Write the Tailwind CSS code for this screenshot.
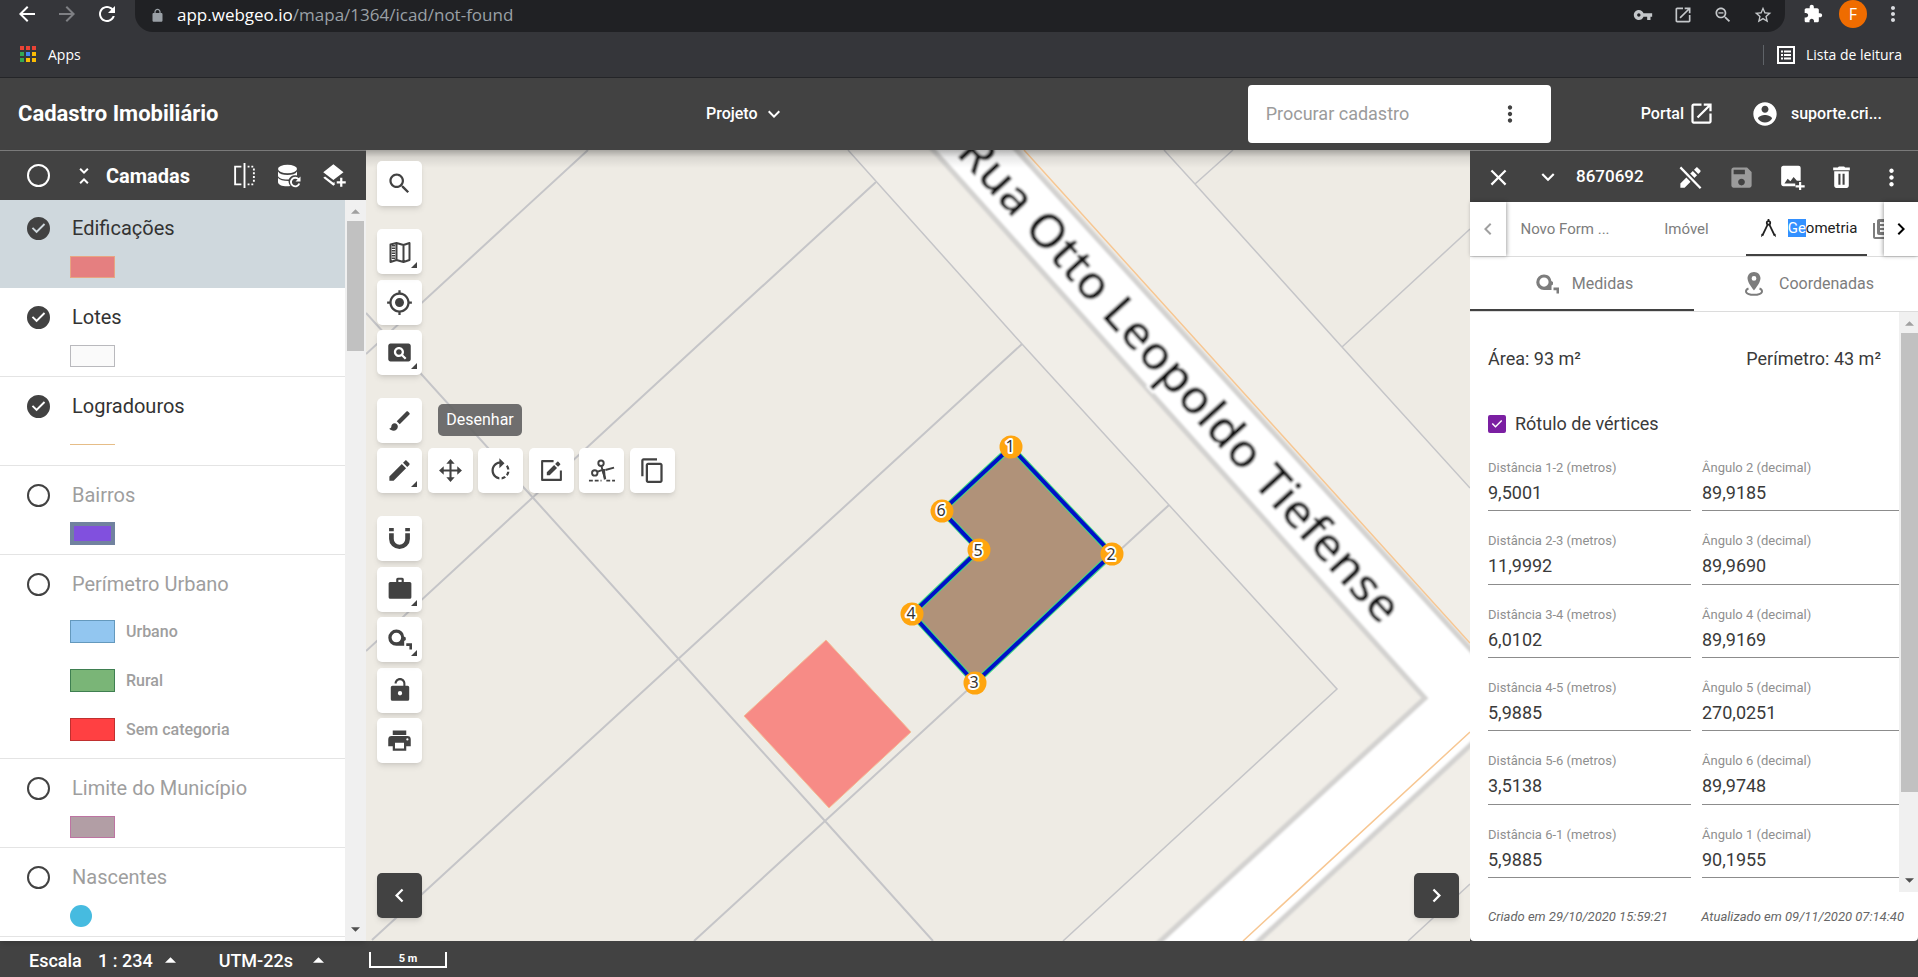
<!DOCTYPE html>
<html lang="pt-BR">
<head>
    <meta charset="UTF-8">
    <meta name="viewport" content="width=device-width, initial-scale=1.0">
    <title>Cadastro Imobiliário</title>
    <script src="https://cdn.jsdelivr.net/npm/@tailwindcss/browser@4"></script>
</head>
<body class="flex flex-col h-screen overflow-hidden bg-[#424242] font-['Roboto',sans-serif]">

    <!-- Icon sprite -->
    <svg class="hidden">
        <symbol id="back" viewBox="0 0 24 24"><path d="M20 11H7.83l5.59-5.59L12 4l-8 8 8 8 1.41-1.41L7.83 13H20v-2z"/></symbol>
        <symbol id="forward" viewBox="0 0 24 24"><path d="M12 4l-1.41 1.41L16.17 11H4v2h12.17l-5.58 5.59L12 20l8-8z"/></symbol>
        <symbol id="reload" viewBox="0 0 24 24"><path d="M17.65 6.35C16.2 4.9 14.21 4 12 4c-4.42 0-7.99 3.58-7.99 8s3.57 8 7.99 8c3.73 0 6.84-2.55 7.73-6h-2.08c-.82 2.33-3.04 4-5.65 4-3.31 0-6-2.69-6-6s2.69-6 6-6c1.66 0 3.14.69 4.22 1.78L13 11h7V4l-2.35 2.35z"/></symbol>
        <symbol id="lock" viewBox="0 0 24 24"><path d="M18 8h-1V6c0-2.76-2.24-5-5-5S7 3.24 7 6v2H6c-1.1 0-2 .9-2 2v10c0 1.1.9 2 2 2h12c1.1 0 2-.9 2-2V10c0-1.1-.9-2-2-2zM9 6c0-1.66 1.34-3 3-3s3 1.34 3 3v2H9V6z"/></symbol>
        <symbol id="key" viewBox="0 0 24 24"><path d="M12.65 10C11.83 7.67 9.61 6 7 6c-3.31 0-6 2.69-6 6s2.69 6 6 6c2.61 0 4.83-1.67 5.65-4H17v4h4v-4h2v-4H12.65zM7 14c-1.1 0-2-.9-2-2s.9-2 2-2 2 .9 2 2-.9 2-2 2z"/></symbol>
        <symbol id="open" viewBox="0 0 24 24"><path d="M19 19H5V5h7V3H5c-1.11 0-2 .9-2 2v14c0 1.1.89 2 2 2h14c1.1 0 2-.9 2-2v-7h-2v7zM14 3v2h3.59l-9.83 9.83 1.41 1.41L19 6.41V10h2V3h-7z"/></symbol>
        <symbol id="search" viewBox="0 0 24 24"><path d="M15.5 14h-.79l-.28-.27C15.41 12.59 16 11.11 16 9.5 16 5.91 13.09 3 9.5 3S3 5.91 3 9.5 5.91 16 9.5 16c1.61 0 3.09-.59 4.23-1.57l.27.28v.79l5 4.99L20.49 19l-4.99-5zm-6 0C7.01 14 5 11.99 5 9.5S7.01 5 9.5 5 14 7.01 14 9.5 11.99 14 9.5 14z"/></symbol>
        <symbol id="zoom-out" viewBox="0 0 24 24"><use href="#search"/><path d="M6.5 8.7h6v1.6h-6z"/></symbol>
        <symbol id="star" viewBox="0 0 24 24"><path d="M22 9.24l-7.19-.62L12 2 9.19 8.63 2 9.24l5.46 4.73L5.82 21 12 17.27 18.18 21l-1.63-7.03L22 9.24zM12 15.4l-3.76 2.27 1-4.28-3.32-2.88 4.38-.38L12 6.1l1.71 4.04 4.38.38-3.32 2.88 1 4.28L12 15.4z"/></symbol>
        <symbol id="puzzle" viewBox="0 0 24 24"><path d="M20.5 11H19V7c0-1.1-.9-2-2-2h-4V3.5C13 2.12 11.88 1 10.5 1S8 2.12 8 3.5V5H4c-1.1 0-1.99.9-1.99 2v3.8H3.5c1.49 0 2.7 1.21 2.7 2.7s-1.21 2.7-2.7 2.7H2V20c0 1.1.9 2 2 2h3.8v-1.5c0-1.49 1.21-2.7 2.7-2.7 1.49 0 2.7 1.21 2.7 2.7V22H17c1.1 0 2-.9 2-2v-4h1.5c1.38 0 2.5-1.12 2.5-2.5S21.88 11 20.5 11z"/></symbol>
        <symbol id="dots" viewBox="0 0 24 24"><path d="M12 8c1.1 0 2-.9 2-2s-.9-2-2-2-2 .9-2 2 .9 2 2 2zm0 2c-1.1 0-2 .9-2 2s.9 2 2 2 2-.9 2-2-.9-2-2-2zm0 6c-1.1 0-2 .9-2 2s.9 2 2 2 2-.9 2-2-.9-2-2-2z"/></symbol>
        <symbol id="reading-list" viewBox="0 0 18 18"><path fill-rule="evenodd" d="M0 0h18v18H0zM2 2v14h14V2zM4 4.500h2v2H4zm3 0h7v2H7zM4 8h2v2H4zm3 0h7v2H7zm-3 3.500h2v2H4zm3 0h7v2H7z"/></symbol>
        <symbol id="down" viewBox="0 0 24 24"><path d="M16.59 8.59L12 13.17 7.41 8.59 6 10l6 6 6-6z"/></symbol>
        <symbol id="left" viewBox="0 0 24 24"><path d="M15.41 7.41L14 6l-6 6 6 6 1.41-1.41L10.830 12z"/></symbol>
        <symbol id="right" viewBox="0 0 24 24"><path d="M10 6L8.590 7.410 13.170 12l-4.580 4.590L10 18l6-6z"/></symbol>
        <symbol id="account" viewBox="0 0 24 24"><path d="M12 2C6.48 2 2 6.48 2 12s4.480 10 10 10 10-4.480 10-10S17.520 2 12 2zm0 3c1.660 0 3 1.340 3 3s-1.340 3-3 3-3-1.340-3-3 1.340-3 3-3zm0 14.200c-2.500 0-4.710-1.280-6-3.220.03-1.990 4-3.080 6-3.080 1.990 0 5.970 1.090 6 3.080-1.290 1.940-3.500 3.220-6 3.220z"/></symbol>
        <symbol id="collapse" viewBox="0 0 24 24"><path d="M7.410 18.590L8.830 20 12 16.830 15.170 20l1.410-1.410L12 14l-4.590 4.590zm9.180-13.180L15.170 4 12 7.170 8.830 4 7.410 5.410 12 10l4.590-4.590z"/></symbol>
        <symbol id="compare" viewBox="0 0 24 24"><path fill="none" stroke="currentColor" stroke-width="1.800" d="M9 3.500H3v17h6M12 0v24"/><path fill="none" stroke="currentColor" stroke-width="1.800" stroke-dasharray="1.800 1.800" d="M15 3.500h6M21 5.300v14M15 20.500h7"/></symbol>
        <symbol id="database" viewBox="0 0 24 24"><ellipse cx="10.500" cy="5" rx="9.500" ry="4.200"/><path d="M1 7.500c1.500 2.600 5 3.500 9.500 3.500s8-.9 9.500-3.500v4c-3.500-1.200-7.500 1-8.300 4C6 15.800 1 14.200 1 11.500zM1 14c1.800 2 5 3 10.500 3 .1 2.200.7 3.600 2 5C7 22.800 1 21.500 1 18z"/><path fill="none" stroke="currentColor" stroke-width="1.900" d="M21.500 15.200a4.300 4.300 0 1 0 .8 4.300"/><path d="M23.500 12.500v5h-5z"/></symbol>
        <symbol id="layers-plus" viewBox="0 0 24 24"><path d="M17 14h2v3h3v2h-3v3h-2v-3h-3v-2h3v-3m-6 2L2 9l9-7 9 7-9 7m0 2.540l1-.790v.250c0 .710.120 1.390.350 2L11 21.070l-9-7 1.620-1.260L11 18.540z"/></symbol>
        <symbol id="tick" viewBox="0 0 24 24"><path d="M10 17l-5-5 1.410-1.410L10 14.170l7.590-7.590L19 8l-9 9z"/></symbol>
        <symbol id="map" viewBox="0 0 24 24"><path fill="none" stroke="currentColor" stroke-width="2" stroke-linejoin="round" d="M2.500 4.500L8.500 3l7 2 6-2v17l-6 2-7-2-6 2zM8.500 3v17M15.500 5v17"/><path fill="none" stroke="currentColor" stroke-width="3.500" stroke-dasharray="1.500 1" d="M5.500 5v15"/></symbol>
        <symbol id="locate" viewBox="0 0 24 24"><path d="M12 8c-2.210 0-4 1.790-4 4s1.790 4 4 4 4-1.790 4-4-1.790-4-4-4zm8.940 3c-.460-4.170-3.770-7.480-7.940-7.940V1h-2v2.060C6.830 3.520 3.520 6.830 3.060 11H1v2h2.060c.460 4.170 3.770 7.480 7.940 7.940V23h2v-2.060c4.170-.460 7.480-3.770 7.940-7.940H23v-2h-2.060zM12 19c-3.870 0-7-3.130-7-7s3.130-7 7-7 7 3.130 7 7-3.130 7-7 7z"/></symbol>
        <symbol id="pageview" viewBox="0 0 24 24"><path d="M11.500 9C10.120 9 9 10.120 9 11.500s1.120 2.500 2.500 2.500 2.500-1.120 2.500-2.500S12.880 9 11.500 9zM20 4H4c-1.100 0-2 .9-2 2v12c0 1.100.9 2 2 2h16c1.100 0 2-.9 2-2V6c0-1.100-.9-2-2-2zm-3.210 14.210l-2.910-2.910c-.690.440-1.510.7-2.390.7C9.010 16 7 13.990 7 11.500S9.010 7 11.500 7 16 9.010 16 11.500c0 .880-.260 1.690-.7 2.390l2.910 2.900-1.420 1.420z"/></symbol>
        <symbol id="brush" viewBox="0 0 24 24"><path d="M7 14c-1.660 0-3 1.340-3 3 0 1.310-1.160 2-2 2 .920 1.220 2.490 2 4 2 2.210 0 4-1.790 4-4 0-1.660-1.340-3-3-3zm13.710-9.370l-1.340-1.340c-.390-.390-1.020-.390-1.410 0L9 12.250 11.750 15l8.960-8.960c.390-.390.390-1.020 0-1.410z"/></symbol>
        <symbol id="pencil" viewBox="0 0 24 24"><path d="M3 17.250V21h3.750L17.810 9.940l-3.750-3.750L3 17.250zM20.710 7.040c.390-.390.390-1.020 0-1.410l-2.340-2.340c-.390-.390-1.020-.390-1.410 0l-1.830 1.830 3.750 3.750 1.830-1.830z"/></symbol>
        <symbol id="move" viewBox="0 0 24 24"><path d="M11 4h2v16h-2zM4 11h16v2H4zM12 1l4 4.500H8zM12 23l-4-4.500h8zM1 12l4.500-4v8zM23 12l-4.500 4V8z"/></symbol>
        <symbol id="rotate" viewBox="0 0 24 24"><path d="M15.550 5.550L11 1v3.070C7.060 4.560 4 7.920 4 12s3.050 7.440 7 7.930v-2.020c-2.840-.480-5-2.940-5-5.910s2.160-5.430 5-5.910V10l4.550-4.450zM19.930 11c-.170-1.390-.720-2.730-1.620-3.890l-1.420 1.420c.540.750.880 1.600 1.020 2.470h2.020zM13 17.900v2.020c1.390-.170 2.740-.710 3.900-1.610l-1.440-1.440c-.750.540-1.590.890-2.460 1.030zm3.890-2.420l1.420 1.410c.9-1.160 1.450-2.500 1.620-3.890h-2.020c-.140.870-.480 1.720-1.020 2.480z"/></symbol>
        <symbol id="edit-box" viewBox="0 0 24 24"><path fill="none" stroke="currentColor" stroke-width="2" stroke-linejoin="round" d="M14 3H3v18h18V12"/><path d="M7.500 13.700V16.500h2.800l7-7-2.800-2.800zM18.300 8.500l2-2a.8.8 0 0 0 0-1.100l-1.700-1.700a.8.8 0 0 0-1.100 0l-2 2z"/></symbol>
        <symbol id="cut" viewBox="0 0 28 24"><g fill="none" stroke="currentColor" stroke-width="2"><circle cx="13.500" cy="4" r="2.800"/><circle cx="7" cy="14" r="2.800"/><path d="M14 7l1.500 6L18 20.500M9.500 13l6-2.500M18 11l9-2.500"/><path stroke-dasharray="4 2" d="M1 22h13M19 22h9"/></g><path d="M14.500 10h3l1 10-2 1z"/></symbol>
        <symbol id="copy" viewBox="0 0 24 24"><path d="M16 1H4c-1.100 0-2 .9-2 2v14h2V3h12V1zm3 4H8c-1.100 0-2 .9-2 2v14c0 1.100.9 2 2 2h11c1.100 0 2-.9 2-2V7c0-1.100-.9-2-2-2zm0 16H8V7h11v14z"/></symbol>
        <symbol id="magnet" viewBox="0 0 24 24"><path d="M2 7v5.500a10 9.500 0 0 0 20 0V7h-4.500v5.500a5.500 5.500 0 0 1-11 0V7zM2 2h4.500v3H2zM17.500 2H22v3h-4.500z"/></symbol>
        <symbol id="briefcase" viewBox="0 0 24 24"><path fill-rule="evenodd" d="M10 1.500h4a1.500 1.500 0 0 1 1.500 1.500v2.500H21A1.500 1.500 0 0 1 22.500 7v12.500A1.500 1.500 0 0 1 21 21H3a1.500 1.500 0 0 1-1.500-1.500V7A1.500 1.500 0 0 1 3 5.500h5.500V3A1.500 1.500 0 0 1 10 1.500zm.5 2v2h3v-2z"/></symbol>
        <symbol id="tape" viewBox="0 0 24 24"><path fill-rule="evenodd" d="M9 2.500c4.200 0 7 2.800 7.300 6.500l1.700 1v2.500l-1.500 1v4.500H9a7.700 7.700 0 0 1 0-15.500zM9 5.500a4.600 4.600 0 1 0 0 9.200 4.600 4.600 0 0 0 0-9.200z"/><path d="M18.500 15.500H24v6h-2.500v-3.200h-3z"/></symbol>
        <symbol id="unlock" viewBox="0 0 24 24"><path fill-rule="evenodd" d="M12 17a2 2 0 1 0 0-4 2 2 0 0 0 0 4zm6-9h-1V6c0-2.760-2.240-5-5-5S7 3.240 7 6h1.900c0-1.710 1.390-3.100 3.100-3.100s3.100 1.390 3.100 3.100v2H5a1.500 1.500 0 0 0-1.500 1.500v11A1.500 1.500 0 0 0 5 22h14a1.500 1.500 0 0 0 1.500-1.500v-11A1.500 1.500 0 0 0 19 8z"/></symbol>
        <symbol id="print" viewBox="0 0 24 24"><path d="M18 3H6v4h12m1 5a1 1 0 0 1-1-1 1 1 0 0 1 1-1 1 1 0 0 1 1 1 1 1 0 0 1-1 1m-3 7H8v-5h8m3-6H5a3 3 0 0 0-3 3v6h4v4h12v-4h4v-6a3 3 0 0 0-3-3z"/></symbol>
        <symbol id="close" viewBox="0 0 24 24"><path d="M19 6.410L17.590 5 12 10.590 6.410 5 5 6.410 10.590 12 5 17.590 6.410 19 12 13.410 17.590 19 19 17.590 13.410 12z"/></symbol>
        <symbol id="edit-off" viewBox="0 0 24 24"><use href="#pencil"/><path stroke="#424242" stroke-width="5" d="M3 3l18 18.500"/><path stroke="currentColor" stroke-width="2" d="M3 3l18 18.500"/></symbol>
        <symbol id="save" viewBox="0 0 24 24"><path d="M17 3H5c-1.110 0-2 .9-2 2v14c0 1.100.890 2 2 2h14c1.100 0 2-.9 2-2V7l-4-4zm-5 16c-1.660 0-3-1.340-3-3s1.340-3 3-3 3 1.340 3 3-1.340 3-3 3zm3-10H5V5h10v4z"/></symbol>
        <symbol id="image-plus" viewBox="0 0 24 24"><path d="M4 1.500c-1.100 0-2 .9-2 2v15c0 1.100.9 2 2 2h11V18H5l3-4.500 2.500 2.500 3-4 3 3.500H20v-12a2 2 0 0 0-2-2zM18.500 16.500v3.200h-3.200v2h3.200V25h2v-3.300h3.200v-2h-3.200v-3.200z"/></symbol>
        <symbol id="trash" viewBox="0 0 24 24"><path fill-rule="evenodd" d="M5 6h14v14c0 1.100-.9 2-2 2H7c-1.100 0-2-.9-2-2zm4 2.500V19h2V8.500zm4 0V19h2V8.500zM20 2.500V5H4V2.500h4.500L9.500 1.500h5l1 1z"/></symbol>
        <symbol id="divider" viewBox="0 0 24 24"><g fill="none" stroke="currentColor" stroke-width="2"><circle cx="12" cy="5.500" r="2"/><path d="M12 1v2.500M11 7.500L5 20M13 7.500L19 20"/></g><path d="M4 18l2.500 1L3.500 22zM20 18l-2.500 1 3 3z"/></symbol>
        <symbol id="library" viewBox="0 0 24 24"><path d="M4 6H2v14c0 1.100.9 2 2 2h14v-2H4V6zm16-4H8c-1.100 0-2 .9-2 2v12c0 1.100.9 2 2 2h12c1.100 0 2-.9 2-2V4c0-1.100-.9-2-2-2zm-1 9H9V9h10v2zm-4 4H9v-2h6v2zm4-8H9V5h10v2z"/></symbol>
        <symbol id="pin" viewBox="0 0 24 24"><path fill-rule="evenodd" d="M12 0C8.200 0 5.500 2.900 5.500 6.300 5.500 11 12 18.500 12 18.500S18.500 11 18.500 6.300C18.500 2.900 15.800 0 12 0zm0 4a2.400 2.400 0 1 1 0 4.800A2.400 2.400 0 0 1 12 4z"/><path fill="none" stroke="currentColor" stroke-width="2" d="M6.500 16.500C2.500 18 2.500 22.800 12 22.800s9.500-4.800 5.500-6.300"/></symbol>
        <symbol id="tri-up" viewBox="0 0 10 5"><path d="M5 0l5 5H0z"/></symbol>
        <symbol id="tri-down" viewBox="0 0 10 5"><path d="M0 0h10L5 5z"/></symbol>
        <symbol id="corner" viewBox="0 0 6 6"><path d="M6 0v6H0z"/></symbol>
    </svg>

    <!-- Browser toolbar -->
    <div class="shrink-0 h-[78px] bg-[#35363a] border-b border-[#242528] text-white font-['Open_Sans',sans-serif]">
        <div class="flex h-8">
            <div class="flex w-[135px] h-7 items-center gap-4 pl-[15px]">
                <button aria-label="Voltar"><svg class="size-6 fill-white"><use href="#back"/></svg></button>
                <button aria-label="Avançar"><svg class="size-6 fill-[#7f8084]"><use href="#forward"/></svg></button>
                <button aria-label="Recarregar"><svg class="size-6 fill-white"><use href="#reload"/></svg></button>
            </div>
            <div class="flex flex-1 items-center rounded-b-[18px] bg-[#202124] pl-[15px] pr-3 pb-0.5">
                <svg class="size-[15px] fill-[#9aa0a6]"><use href="#lock"/></svg>
                <p class="ml-3 text-[17px] text-[#9aa0a6]"><span class="text-white">app.webgeo.io</span>/mapa/1364/icad/not-found</p>
                <div class="flex ml-auto items-center gap-5 fill-[#c4c7ca]">
                    <svg class="size-5"><use href="#key"/></svg>
                    <svg class="size-5"><use href="#open"/></svg>
                    <svg class="size-5"><use href="#zoom-out"/></svg>
                    <svg class="size-5"><use href="#star"/></svg>
                </div>
            </div>
            <div class="flex w-[133px] h-7 items-center pl-[18px]">
                <svg class="size-5 fill-white"><use href="#puzzle"/></svg>
                <span class="flex size-7 ml-4 items-center justify-center rounded-full bg-[#ef6c00] text-[16px]">F</span>
                <svg class="size-6 ml-[14px] fill-[#dadce0]"><use href="#dots"/></svg>
            </div>
        </div>
        <div class="flex h-[45px] items-center pl-5 pr-4 text-[14px]">
            <svg class="w-[17px] h-[17px]" viewBox="0 0 17 17">
                <path fill="#ea4335" d="M0 0h4v4H0zM6 0h4v4H6zM12 0h4v4h-4z"/>
                <path fill="#34a853" d="M0 6h4v4H0zM0 12h4v4H0z"/>
                <path fill="#4285f4" d="M6 6h4v4H6z"/>
                <path fill="#fbbc04" d="M12 6h4v4h-4zM6 12h4v4H6zM12 12h4v4h-4z"/>
            </svg>
            <a href="#" class="ml-[11px]">Apps</a>
            <span class="ml-auto w-px h-5 bg-[#5f6368]"></span>
            <svg class="size-[18px] ml-[13px] fill-white"><use href="#reading-list"/></svg>
            <a href="#" class="ml-[11px]">Lista de leitura</a>
        </div>
    </div>

    <!-- App header -->
    <header class="flex shrink-0 h-[72px] items-center pl-[18px] pr-[36px] pb-px text-white font-medium">
        <h1 class="w-[688px] text-[22px] font-bold">Cadastro Imobiliário</h1>
        <button class="flex items-center gap-1 text-[16px]">Projeto <svg class="size-6 fill-white"><use href="#down"/></svg></button>
        <div class="flex ml-auto mr-[90px] w-[303px] h-[58px] items-center rounded-[4px] bg-white pl-[18px] pr-7">
            <input type="text" aria-label="Procurar cadastro" placeholder="Procurar cadastro" class="flex-1 min-w-0 text-[18px] font-normal text-gray-800 placeholder:text-[#9b9b9b] outline-none">
            <button aria-label="Opções de busca"><svg class="size-[26px] fill-[#424242]"><use href="#dots"/></svg></button>
        </div>
        <a href="#" class="flex items-center gap-1 text-[16px]">Portal <svg class="size-[27px] fill-white"><use href="#open"/></svg></a>
        <button class="flex ml-9 items-center gap-3 text-[16px]"><svg class="size-7 fill-white"><use href="#account"/></svg>suporte.cri...</button>
    </header>

    <main class="flex flex-1 min-h-0">

        <!-- Layers -->
        <aside class="flex flex-col shrink-0 w-[366px] bg-white shadow-md">
            <div class="flex relative z-10 shrink-0 h-[50px] items-center border-t border-[#7a7a7a] bg-[#424242] pl-[27px] pr-[18px] text-white">
                <input type="checkbox" aria-label="Todas as camadas" class="appearance-none size-[23px] rounded-full border-2 border-white">
                <button aria-label="Recolher" class="ml-[22px]"><svg class="size-6 fill-white"><use href="#collapse"/></svg></button>
                <h2 class="ml-[10px] text-[20px] font-bold">Camadas</h2>
                <div class="flex ml-auto items-center gap-5 fill-white">
                    <button aria-label="Comparar"><svg class="size-[25px]"><use href="#compare"/></svg></button>
                    <button aria-label="Atualizar dados"><svg class="size-6"><use href="#database"/></svg></button>
                    <button aria-label="Adicionar camada"><svg class="size-[27px]"><use href="#layers-plus"/></svg></button>
                </div>
            </div>
            <div class="flex flex-1 min-h-0 -mt-px">
                <ul class="flex-1 overflow-hidden text-[20px] text-[#9e9e9e]">
                    <li class="h-[89px] border-b border-[#cfd8dd] bg-[#cfd8dd] pt-[15px]">
                        <label class="flex h-7 items-center gap-[22px] pl-[27px] text-[#333]">
                            <span class="grid"><input type="checkbox" checked class="col-start-1 row-start-1 appearance-none size-[23px] rounded-full border-2 border-[#424242] checked:bg-[#424242]"><svg class="col-start-1 row-start-1 size-[23px] fill-[#cfd8dd] pointer-events-none"><use href="#tick"/></svg></span>
                            Edificações
                        </label>
                        <div class="w-[45px] h-[22px] ml-[70px] mt-[14px] border border-[#e8a582] bg-[#e57f80]"></div>
                    </li>
                    <li class="h-[89px] border-b border-[#e4e4e4] pt-[15px]">
                        <label class="flex h-7 items-center gap-[22px] pl-[27px] text-[#333]">
                            <span class="grid"><input type="checkbox" checked class="col-start-1 row-start-1 appearance-none size-[23px] rounded-full border-2 border-[#424242] checked:bg-[#424242]"><svg class="col-start-1 row-start-1 size-[23px] fill-white pointer-events-none"><use href="#tick"/></svg></span>
                            Lotes
                        </label>
                        <div class="w-[45px] h-[22px] ml-[70px] mt-[14px] border border-[#b9b9bd] bg-[#fafafa]"></div>
                    </li>
                    <li class="h-[89px] border-b border-[#e4e4e4] pt-[15px]">
                        <label class="flex h-7 items-center gap-[22px] pl-[27px] text-[#333]">
                            <span class="grid"><input type="checkbox" checked class="col-start-1 row-start-1 appearance-none size-[23px] rounded-full border-2 border-[#424242] checked:bg-[#424242]"><svg class="col-start-1 row-start-1 size-[23px] fill-white pointer-events-none"><use href="#tick"/></svg></span>
                            Logradouros
                        </label>
                        <div class="w-[45px] h-px ml-[70px] mt-6 bg-[#e6bd87]"></div>
                    </li>
                    <li class="h-[89px] border-b border-[#e4e4e4] pt-[15px]">
                        <label class="flex h-7 items-center gap-[22px] pl-[27px]">
                            <input type="checkbox" class="appearance-none size-[23px] rounded-full border-2 border-[#424242]">
                            Bairros
                        </label>
                        <div class="w-[45px] h-[23px] ml-[70px] mt-[13px] border-4 border-[#71829f] bg-[#8150de]"></div>
                    </li>
                    <li class="h-[204px] border-b border-[#e4e4e4] pt-[15px]">
                        <label class="flex h-7 items-center gap-[22px] pl-[27px]">
                            <input type="checkbox" class="appearance-none size-[23px] rounded-full border-2 border-[#424242]">
                            Perímetro Urbano
                        </label>
                        <div class="mt-[9px] pl-[70px] text-[16px] font-medium">
                            <div class="flex h-[49px] items-center gap-[11px]"><span class="w-[45px] h-[23px] border border-[#6499bd] bg-[#92c6f0]"></span>Urbano</div>
                            <div class="flex h-[49px] items-center gap-[11px]"><span class="w-[45px] h-[23px] border border-[#3f7f51] bg-[#7ab577]"></span>Rural</div>
                            <div class="flex h-[49px] items-center gap-[11px]"><span class="w-[45px] h-[23px] border border-[#c0302f] bg-[#ff4042]"></span>Sem categoria</div>
                        </div>
                    </li>
                    <li class="h-[89px] border-b border-[#e4e4e4] pt-[15px]">
                        <label class="flex h-7 items-center gap-[22px] pl-[27px]">
                            <input type="checkbox" class="appearance-none size-[23px] rounded-full border-2 border-[#424242]">
                            Limite do Município
                        </label>
                        <div class="w-[45px] h-[22px] ml-[70px] mt-[14px] border border-[#bd74a2] bg-[#b29ea5]"></div>
                    </li>
                    <li class="h-[89px] border-b border-[#e4e4e4] pt-[15px]">
                        <label class="flex h-7 items-center gap-[22px] pl-[27px]">
                            <input type="checkbox" class="appearance-none size-[23px] rounded-full border-2 border-[#424242]">
                            Nascentes
                        </label>
                        <div class="size-[22px] ml-[70px] mt-[14px] rounded-full bg-[#46bbe0]"></div>
                    </li>
                </ul>
                <!-- Scrollbar -->
                <div class="flex flex-col w-[21px] items-center bg-[#f0f0f0]">
                    <svg class="w-[9px] h-[5px] mt-[10px] mb-[7px] fill-[#a0a0a0]"><use href="#tri-up"/></svg>
                    <div class="w-[17px] h-[130px] bg-[#c1c1c1]"></div>
                    <svg class="w-[9px] h-[5px] mt-auto mb-[9px] fill-[#505050]"><use href="#tri-down"/></svg>
                </div>
            </div>
        </aside>

        <!-- Map -->
        <section class="relative flex-1 min-w-0 overflow-hidden bg-[#eeebe4]">
            <svg class="absolute inset-0 size-full" viewBox="366 150 1104 791" preserveAspectRatio="xMinYMin slice">
                <defs>
                    <filter id="soft" x="-5%" y="-5%" width="110%" height="110%"><feGaussianBlur stdDeviation="1"/></filter>
                    <linearGradient id="shade" x1="0" y1="0" x2="0" y2="1"><stop offset="0" stop-color="#000" stop-opacity=".3"/><stop offset=".4" stop-color="#000" stop-opacity=".09"/><stop offset="1" stop-color="#000" stop-opacity="0"/></linearGradient>
                </defs>
                <path fill="#f1eee8" d="M848 150H1164L1195 184 1341 347 1470 488V884L1408 941H1063L1337 689 1169 505 1022 344z"/>
                <!-- Streets -->
                <g filter="url(#soft)">
                    <path fill="#fff" stroke="#d3d2d0" stroke-width="5" d="M918 133L1142 383 1425 698 1142 958 1240 958 1490 727V671L1001 133z"/>
                </g>
                <!-- Lots -->
                <g fill="none" stroke="#c5c5c8">
                    <path stroke-width="2" d="M588 150L366 354M366 313L535 500 825 821 933 941M876 182L695 348 366 651M1022 344L700 639 372 940M1169 505L825 821 694 941"/>
                    <path stroke-width="1.500" d="M848 150L1022 344 1169 505 1337 689 1063 941M1164 150L1195 184 1342 347 1470 488M1233 150L1195 184M1342 347L1470 229M1470 884L1408 941"/>
                </g>
                <path fill="none" stroke="#f7c793" stroke-width="1.500" d="M1024 150L1470 643M1470 732L1243 941"/>
                <g transform="translate(955 154) rotate(48)" filter="url(#soft)" class="font-['Noto_Sans',sans-serif] text-[48px]">
                    <text fill="#111" stroke="#fff" stroke-width="5" paint-order="stroke" class="font-medium">Rua Otto Leopoldo Tiefense</text>
                </g>
                <!-- Buildings -->
                <path fill="#f78b86" stroke="#f3bd95" d="M826 640L911 732 829 808 744 716z"/>
                <path fill="#b09279" stroke="#3fdc84" stroke-width="6" d="M1011 447L1112 554 975 683 912 614 979 550 942 511z"/>
                <path fill="none" stroke="#0010c8" stroke-width="4" d="M1011 447L1112 554 975 683 912 614 979 550 942 511z"/>
                <g fill="#ffa50f">
                    <circle cx="1011" cy="447" r="11.500"/><circle cx="1112" cy="554" r="11.500"/><circle cx="975" cy="683" r="11.500"/>
                    <circle cx="912" cy="614" r="11.500"/><circle cx="979" cy="550" r="11.500"/><circle cx="942" cy="511" r="11.500"/>
                </g>
                <g fill="#333" stroke="#fff" stroke-width="4" stroke-linejoin="round" paint-order="stroke" text-anchor="middle" class="font-['Noto_Sans',sans-serif] text-[16px]">
                    <text x="1010" y="452">1</text><text x="1111" y="560">2</text><text x="974" y="688">3</text>
                    <text x="911" y="619">4</text><text x="978" y="556">5</text><text x="941" y="516">6</text>
                </g>
                <path fill="url(#shade)" d="M366 150h1104v18H366z"/>
            </svg>

            <!-- Toolbox -->
            <div class="absolute left-[11px] top-[11px] flex flex-col gap-[23px] fill-[#424242] text-[#424242]">
                <button aria-label="Pesquisar" class="flex size-[45px] items-center justify-center rounded-[5px] bg-white shadow-md"><svg class="size-[27px]"><use href="#search"/></svg></button>
                <div class="flex flex-col justify-between h-[146px]">
                    <button aria-label="Mapas base" class="relative flex size-[45px] items-center justify-center rounded-[5px] bg-white shadow-md"><svg class="size-6"><use href="#map"/></svg><svg class="absolute right-[5px] bottom-[6px] size-[6px]"><use href="#corner"/></svg></button>
                    <button aria-label="Minha localização" class="flex size-[45px] items-center justify-center rounded-[5px] bg-white shadow-md"><svg class="size-[27px]"><use href="#locate"/></svg></button>
                    <button aria-label="Consultar" class="relative flex size-[45px] items-center justify-center rounded-[5px] bg-white shadow-md"><svg class="size-[27px]"><use href="#pageview"/></svg><svg class="absolute right-[5px] bottom-[6px] size-[6px]"><use href="#corner"/></svg></button>
                </div>
                <div class="flex flex-col justify-between h-[95px]">
                    <button aria-label="Pincel" class="flex size-[45px] items-center justify-center rounded-[5px] bg-white shadow-md"><svg class="size-[26px]"><use href="#brush"/></svg></button>
                    <div class="flex justify-between w-[298px]">
                        <button aria-label="Desenhar" class="relative flex size-[45px] items-center justify-center rounded-[5px] bg-white shadow-md"><svg class="size-[27px]"><use href="#pencil"/></svg><svg class="absolute right-[5px] bottom-[6px] size-[6px]"><use href="#corner"/></svg></button>
                        <button aria-label="Mover" class="flex size-[45px] items-center justify-center rounded-[5px] bg-white shadow-md"><svg class="size-[25px]"><use href="#move"/></svg></button>
                        <button aria-label="Rotacionar" class="flex size-[45px] items-center justify-center rounded-[5px] bg-white shadow-md"><svg class="size-[27px]"><use href="#rotate"/></svg></button>
                        <button aria-label="Editar" class="flex size-[45px] items-center justify-center rounded-[5px] bg-white shadow-md"><svg class="size-[25px]"><use href="#edit-box"/></svg></button>
                        <button aria-label="Dividir" class="flex size-[45px] items-center justify-center rounded-[5px] bg-white shadow-md"><svg class="w-[27px] h-6"><use href="#cut"/></svg></button>
                        <button aria-label="Copiar" class="flex size-[45px] items-center justify-center rounded-[5px] bg-white shadow-md"><svg class="size-[27px]"><use href="#copy"/></svg></button>
                    </div>
                </div>
                <div class="flex flex-col justify-between h-[247px]">
                    <button aria-label="Aderência" class="flex size-[45px] items-center justify-center rounded-[5px] bg-white shadow-md"><svg class="size-[25px]"><use href="#magnet"/></svg></button>
                    <button aria-label="Ferramentas" class="relative flex size-[45px] items-center justify-center rounded-[5px] bg-white shadow-md"><svg class="size-[26px]"><use href="#briefcase"/></svg><svg class="absolute right-[5px] bottom-[6px] size-[6px]"><use href="#corner"/></svg></button>
                    <button aria-label="Medir" class="relative flex size-[45px] items-center justify-center rounded-[5px] bg-white shadow-md"><svg class="size-[25px]"><use href="#tape"/></svg><svg class="absolute right-[5px] bottom-[6px] size-[6px]"><use href="#corner"/></svg></button>
                    <button aria-label="Desbloquear" class="flex size-[45px] items-center justify-center rounded-[5px] bg-white shadow-md"><svg class="size-[26px]"><use href="#unlock"/></svg></button>
                    <button aria-label="Imprimir" class="flex size-[45px] items-center justify-center rounded-[5px] bg-white shadow-md"><svg class="size-[27px]"><use href="#print"/></svg></button>
                </div>
            </div>
            <div role="tooltip" class="absolute left-[72px] top-[254px] flex w-[84px] h-8 items-center justify-center rounded-[5px] bg-[#616161]/90 text-[16px] text-white">Desenhar</div>

            <button aria-label="Ocultar camadas" class="absolute left-[11px] bottom-[23px] flex size-[45px] items-center justify-center rounded-[5px] bg-[#424242] shadow-md"><svg class="size-[27px] fill-white"><use href="#left"/></svg></button>
            <button aria-label="Ocultar painel" class="absolute right-[11px] bottom-[23px] flex size-[45px] items-center justify-center rounded-[5px] bg-[#424242] shadow-md"><svg class="size-[27px] fill-white"><use href="#right"/></svg></button>
        </section>

        <!-- Feature panel -->
        <aside class="flex flex-col shrink-0 w-[448px] rounded-b-[4px] bg-white">
            <div class="flex shrink-0 h-[52px] items-center border-t border-[#7a7a7a] bg-[#424242] pl-[15px] pr-[13px] pt-px fill-white text-white">
                <button aria-label="Fechar"><svg class="size-[27px]"><use href="#close"/></svg></button>
                <button aria-label="Selecionar feição" class="ml-[23px]"><svg class="size-[26px]"><use href="#down"/></svg></button>
                <h2 class="ml-[15px] text-[17px] font-medium">8670692</h2>
                <div class="flex ml-auto items-center gap-6">
                    <button aria-label="Parar edição"><svg class="size-[27px]"><use href="#edit-off"/></svg></button>
                    <button aria-label="Salvar" disabled class="fill-[#9b9b9b]"><svg class="size-[27px]"><use href="#save"/></svg></button>
                    <button aria-label="Adicionar imagem"><svg class="size-[26px] overflow-visible"><use href="#image-plus"/></svg></button>
                    <button aria-label="Excluir"><svg class="size-[25px]"><use href="#trash"/></svg></button>
                    <button aria-label="Mais opções"><svg class="size-[27px]"><use href="#dots"/></svg></button>
                </div>
            </div>

            <!-- Tabs -->
            <nav class="flex shrink-0 h-[55px] border-b border-[#dcdcdc] text-[15px] text-[#7d7d7d]">
                <button aria-label="Abas anteriores" class="flex relative z-10 shrink-0 w-9 items-center justify-center bg-white shadow-[1px_0_4px_rgba(0,0,0,0.35)]"><svg class="size-6 fill-[#a0a0a0]"><use href="#left"/></svg></button>
                <div class="flex flex-1 min-w-0 overflow-hidden">
                    <button class="shrink-0 w-[116px] pl-0.5">Novo Form ...</button>
                    <button class="shrink-0 w-[124px] pl-[5px]">Imóvel</button>
                    <button class="flex shrink-0 w-[121px] items-center justify-center gap-[9px] border-b-2 border-[#424242] pl-0.5 text-[#212121]"><svg class="size-[21px] fill-current"><use href="#divider"/></svg><span><span class="bg-[#3390ff] text-white">Ge</span>ometria</span></button>
                    <button aria-label="Documentos" class="shrink-0 ml-1"><svg class="size-6 fill-[#7d7d7d]"><use href="#library"/></svg></button>
                </div>
                <button aria-label="Próximas abas" class="flex relative z-10 shrink-0 w-[34px] items-center justify-center bg-white shadow-[-1px_0_4px_rgba(0,0,0,0.35)]"><svg class="size-6 fill-black"><use href="#right"/></svg></button>
            </nav>
            <nav class="flex shrink-0 h-[55px] border-b border-[#dcdcdc] text-[16px] text-[#7d7d7d]">
                <button class="flex flex-1 items-center justify-center gap-[13px] border-b-2 border-[#424242] pt-0.5 pl-1"><svg class="size-6 fill-current"><use href="#tape"/></svg>Medidas</button>
                <button class="flex flex-1 items-center justify-center gap-[13px] pl-1"><svg class="size-6 fill-current"><use href="#pin"/></svg>Coordenadas</button>
            </nav>

            <div class="flex flex-1 min-h-0">
                <div class="flex flex-col flex-1 min-w-0 overflow-hidden pl-[18px] pb-[14px] text-[18px] text-[#3a3a3a]">
                    <div class="flex shrink-0 h-[93px] items-center justify-between pr-[18px]">
                        <p>Área: 93 m²</p>
                        <p>Perímetro: 43 m²</p>
                    </div>
                    <label class="flex shrink-0 h-[37px] items-center gap-[9px]">
                        <span class="grid"><input type="checkbox" checked class="col-start-1 row-start-1 appearance-none size-[18px] rounded-[2px] border-2 border-[#7b1fa2] checked:bg-[#7b1fa2]"><svg class="col-start-1 row-start-1 size-[18px] fill-white pointer-events-none"><use href="#tick"/></svg></span>
                        Rótulo de vértices
                    </label>
                    <div class="grid flex-1 grid-cols-2 auto-rows-fr gap-x-[11px] -mt-1 -mr-[6px]">
                        <label class="flex flex-col justify-end border-b border-[#8c8c8c] pb-[3px]"><span class="text-[13px] text-[#8f8f8f]">Distância 1-2 (metros)</span><input type="text" value="9,5001" class="w-full h-[30px] outline-none"></label>
                        <label class="flex flex-col justify-end border-b border-[#8c8c8c] pb-[3px]"><span class="text-[13px] text-[#8f8f8f]">Ângulo 2 (decimal)</span><input type="text" value="89,9185" class="w-full h-[30px] outline-none"></label>
                        <label class="flex flex-col justify-end border-b border-[#8c8c8c] pb-[3px]"><span class="text-[13px] text-[#8f8f8f]">Distância 2-3 (metros)</span><input type="text" value="11,9992" class="w-full h-[30px] outline-none"></label>
                        <label class="flex flex-col justify-end border-b border-[#8c8c8c] pb-[3px]"><span class="text-[13px] text-[#8f8f8f]">Ângulo 3 (decimal)</span><input type="text" value="89,9690" class="w-full h-[30px] outline-none"></label>
                        <label class="flex flex-col justify-end border-b border-[#8c8c8c] pb-[3px]"><span class="text-[13px] text-[#8f8f8f]">Distância 3-4 (metros)</span><input type="text" value="6,0102" class="w-full h-[30px] outline-none"></label>
                        <label class="flex flex-col justify-end border-b border-[#8c8c8c] pb-[3px]"><span class="text-[13px] text-[#8f8f8f]">Ângulo 4 (decimal)</span><input type="text" value="89,9169" class="w-full h-[30px] outline-none"></label>
                        <label class="flex flex-col justify-end border-b border-[#8c8c8c] pb-[3px]"><span class="text-[13px] text-[#8f8f8f]">Distância 4-5 (metros)</span><input type="text" value="5,9885" class="w-full h-[30px] outline-none"></label>
                        <label class="flex flex-col justify-end border-b border-[#8c8c8c] pb-[3px]"><span class="text-[13px] text-[#8f8f8f]">Ângulo 5 (decimal)</span><input type="text" value="270,0251" class="w-full h-[30px] outline-none"></label>
                        <label class="flex flex-col justify-end border-b border-[#8c8c8c] pb-[3px]"><span class="text-[13px] text-[#8f8f8f]">Distância 5-6 (metros)</span><input type="text" value="3,5138" class="w-full h-[30px] outline-none"></label>
                        <label class="flex flex-col justify-end border-b border-[#8c8c8c] pb-[3px]"><span class="text-[13px] text-[#8f8f8f]">Ângulo 6 (decimal)</span><input type="text" value="89,9748" class="w-full h-[30px] outline-none"></label>
                        <label class="flex flex-col justify-end border-b border-[#8c8c8c] pb-[3px]"><span class="text-[13px] text-[#8f8f8f]">Distância 6-1 (metros)</span><input type="text" value="5,9885" class="w-full h-[30px] outline-none"></label>
                        <label class="flex flex-col justify-end border-b border-[#8c8c8c] pb-[3px]"><span class="text-[13px] text-[#8f8f8f]">Ângulo 1 (decimal)</span><input type="text" value="90,1955" class="w-full h-[30px] outline-none"></label>
                    </div>
                </div>
                <!-- Scrollbar -->
                <div class="flex relative flex-col shrink-0 w-[19px] items-center bg-[#f0f0f0] pl-0.5">
                    <svg class="w-[9px] h-[5px] mt-[9px] mb-[7px] fill-[#a0a0a0]"><use href="#tri-up"/></svg>
                    <div class="w-[17px] h-[459px] bg-[#c1c1c1]"></div>
                    <svg class="w-[9px] h-[5px] mt-auto mb-[9px] fill-[#505050]"><use href="#tri-down"/></svg>
                </div>
            </div>
            <div class="flex shrink-0 h-[49px] items-center justify-between pl-[18px] pr-[14px] text-[13px] italic text-[#666]">
                <p>Criado em 29/10/2020 15:59:21</p>
                <p>Atualizado em 09/11/2020 07:14:40</p>
            </div>
        </aside>
    </main>

    <!-- Status bar -->
    <footer class="flex shrink-0 h-9 items-center pl-[29px] pt-0.5 text-[18px] font-medium text-white">
        <button class="flex items-center"><span class="w-[69px] text-left">Escala</span><span>1 : 234</span><svg class="w-[11px] h-[6px] ml-3 fill-white"><use href="#tri-up"/></svg></button>
        <button class="flex ml-[43px] items-center">UTM-22s<svg class="w-[11px] h-[6px] ml-5 fill-white"><use href="#tri-up"/></svg></button>
        <div class="flex ml-[45px] w-[78px] h-4 items-center justify-center border-2 border-t-0 border-white text-[11px] font-bold">5 m</div>
    </footer>
</body>
</html>
